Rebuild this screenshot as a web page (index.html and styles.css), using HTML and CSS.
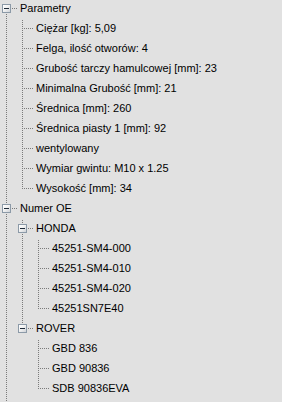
FILE: index.html
```html
<!DOCTYPE html>
<html lang="pl">
<head>
<meta charset="utf-8">
<title>Parametry</title>
<link rel="stylesheet" href="styles.css">
</head>
<body>
<ul class="tree root">
  <li class="node has-next first">
    <div class="row"><span class="gutter no-up"><span class="toggle"></span></span><span class="label">Parametry</span></div>
    <ul class="tree">
      <li class="node has-next"><div class="row"><span class="gutter"></span><span class="label">Ciężar [kg]: 5,09</span></div></li>
      <li class="node has-next"><div class="row"><span class="gutter"></span><span class="label">Felga, ilość otworów: 4</span></div></li>
      <li class="node has-next"><div class="row"><span class="gutter"></span><span class="label">Grubość tarczy hamulcowej [mm]: 23</span></div></li>
      <li class="node has-next"><div class="row"><span class="gutter"></span><span class="label">Minimalna Grubość [mm]: 21</span></div></li>
      <li class="node has-next"><div class="row"><span class="gutter"></span><span class="label">Średnica [mm]: 260</span></div></li>
      <li class="node has-next"><div class="row"><span class="gutter"></span><span class="label">Średnica piasty 1 [mm]: 92</span></div></li>
      <li class="node has-next"><div class="row"><span class="gutter"></span><span class="label">wentylowany</span></div></li>
      <li class="node has-next"><div class="row"><span class="gutter"></span><span class="label">Wymiar gwintu: M10 x 1.25</span></div></li>
      <li class="node"><div class="row"><span class="gutter"></span><span class="label">Wysokość [mm]: 34</span></div></li>
    </ul>
  </li>
  <li class="node has-next open-end">
    <div class="row"><span class="gutter"><span class="toggle"></span></span><span class="label">Numer OE</span></div>
    <ul class="tree">
      <li class="node has-next">
        <div class="row"><span class="gutter"><span class="toggle"></span></span><span class="label">HONDA</span></div>
        <ul class="tree">
          <li class="node has-next"><div class="row"><span class="gutter"></span><span class="label">45251-SM4-000</span></div></li>
          <li class="node has-next"><div class="row"><span class="gutter"></span><span class="label">45251-SM4-010</span></div></li>
          <li class="node has-next"><div class="row"><span class="gutter"></span><span class="label">45251-SM4-020</span></div></li>
          <li class="node"><div class="row"><span class="gutter"></span><span class="label">45251SN7E40</span></div></li>
        </ul>
      </li>
      <li class="node">
        <div class="row"><span class="gutter"><span class="toggle"></span></span><span class="label">ROVER</span></div>
        <ul class="tree">
          <li class="node has-next"><div class="row"><span class="gutter"></span><span class="label">GBD 836</span></div></li>
          <li class="node has-next"><div class="row"><span class="gutter"></span><span class="label">GBD 90836</span></div></li>
          <li class="node"><div class="row"><span class="gutter"></span><span class="label">SDB 90836EVA</span></div></li>
        </ul>
      </li>
    </ul>
  </li>
</ul>
</body>
</html>
```
FILE: styles.css
```css
html, body {
  margin: 0;
  padding: 0;
  background: #e1e1e1;
}

body {
  font-family: "Liberation Sans", Arial, sans-serif;
  font-size: 11px;
  color: #000;
  overflow: hidden;
}

.tree {
  list-style: none;
  margin: 0;
  padding: 0;
}

.tree .tree {
  padding-left: 16px;
}

.node.has-next {
  background: repeating-linear-gradient(to bottom, #7a7a7a 0 1px, transparent 1px 2px) 6px 0 / 1px 100% no-repeat;
}

.node.first {
  background-position: 6px 4px;
  background-size: 1px calc(100% - 4px);
}

.node.open-end {
  padding-bottom: 12px;
}

.row {
  display: flex;
  height: 20px;
  align-items: flex-start;
}

.gutter {
  flex: 0 0 20px;
  width: 20px;
  height: 20px;
  display: flex;
  align-items: flex-start;
  background:
    repeating-linear-gradient(to right, #7a7a7a 0 1px, transparent 1px 2px) 6px 8px / 12px 1px no-repeat,
    repeating-linear-gradient(to bottom, #7a7a7a 0 1px, transparent 1px 2px) 6px 0 / 1px 9px no-repeat;
}

.gutter.no-up {
  background:
    repeating-linear-gradient(to right, #7a7a7a 0 1px, transparent 1px 2px) 6px 8px / 12px 1px no-repeat;
}

.toggle {
  box-sizing: border-box;
  width: 9px;
  height: 9px;
  margin: 4px 0 0 2px;
  border: 1px solid #8c9aa8;
  background: linear-gradient(135deg, #ffffff 0%, #f2f2f2 45%, #cfd3d8 100%);
  display: flex;
  align-items: center;
  justify-content: center;
}

.toggle::before {
  content: "";
  width: 5px;
  height: 1px;
  background: #1e2a38;
}

.label {
  line-height: 16px;
  white-space: nowrap;
}
```
